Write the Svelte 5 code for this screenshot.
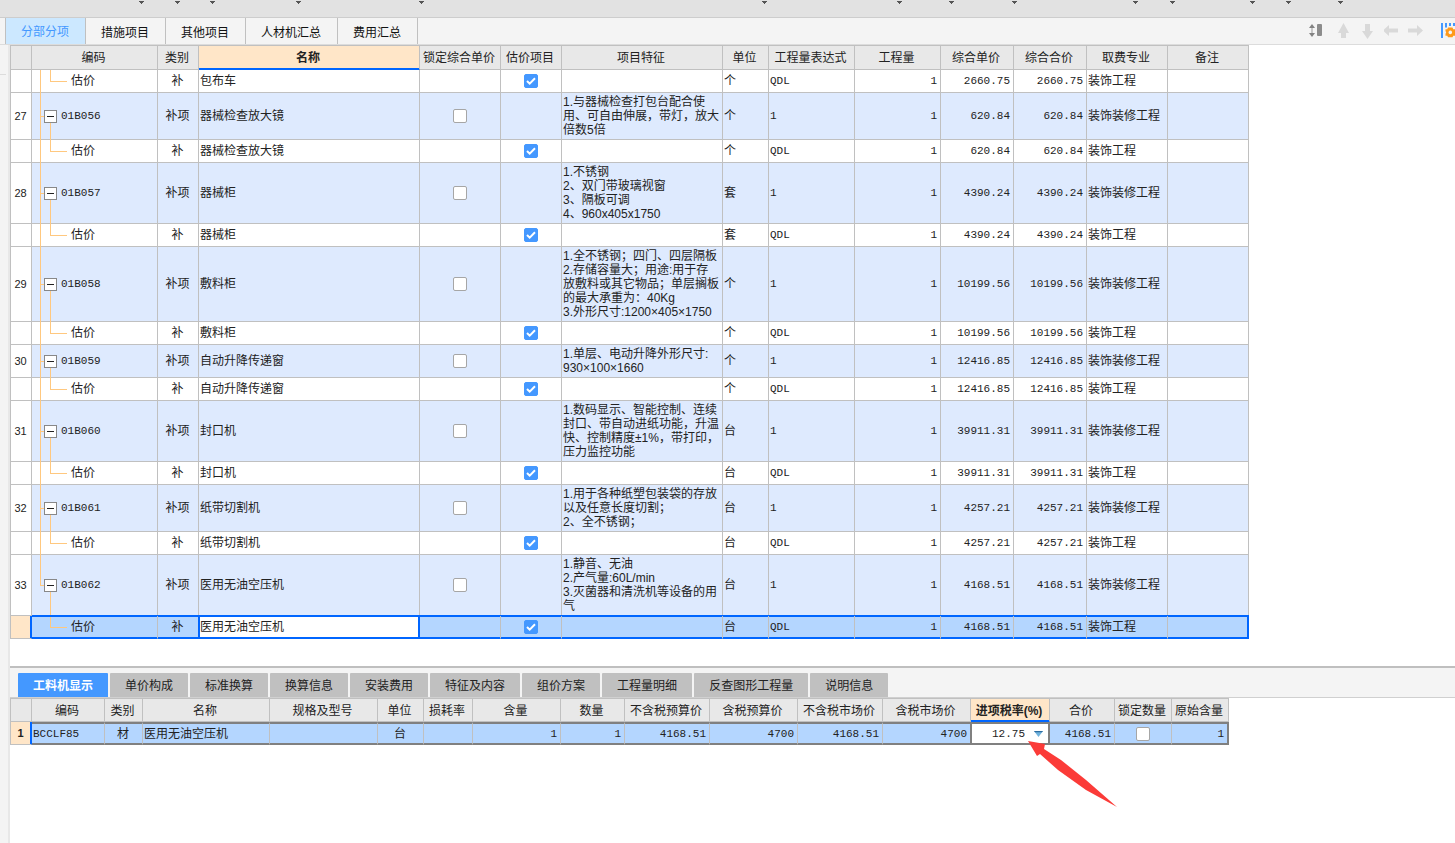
<script>
  // Horizontal distance from one toolbar menu caret to the next.
  const menus = [144, 36, 35, 86, 123, 343, 135, 52, 63, 121, 37, 80, 36, 52];

  const topTabs = ['分部分项', '措施项目', '其他项目', '人材机汇总', '费用汇总'];
  const bottomTabs = ['工料机显示', '单价构成', '标准换算', '换算信息', '安装费用', '特征及内容', '组价方案', '工程量明细', '反查图形工程量', '说明信息'];

  let topActive = $state('分部分项');
  let bottomActive = $state('工料机显示');

  const mainCols = [
    ['', 21], ['编码', 126], ['类别', 41], ['名称', 221], ['锁定综合单价', 81], ['估价项目', 61], ['项目特征', 161],
    ['单位', 46], ['工程量表达式', 86], ['工程量', 86], ['综合单价', 73], ['综合合价', 73], ['取费专业', 81], ['备注', 81]
  ];

  const items = [
    { no: 27, code: '01B056', name: '器械检查放大镜', unit: '个', price: '620.84', spec: ['1.与器械检查打包台配合使', '用、可自由伸展，带灯，放大', '倍数5倍'] },
    { no: 28, code: '01B057', name: '器械柜', unit: '套', price: '4390.24', spec: ['1.不锈钢', '2、双门带玻璃视窗', '3、隔板可调', '4、960x405x1750'] },
    { no: 29, code: '01B058', name: '敷料柜', unit: '个', price: '10199.56', spec: ['1.全不锈钢；四门、四层隔板', '2.存储容量大；用途:用于存', '放敷料或其它物品；单层搁板', '的最大承重为：40Kg', '3.外形尺寸:1200×405×1750'] },
    { no: 30, code: '01B059', name: '自动升降传递窗', unit: '个', price: '12416.85', spec: ['1.单层、电动升降外形尺寸:', '930×100×1660'] },
    { no: 31, code: '01B060', name: '封口机', unit: '台', price: '39911.31', spec: ['1.数码显示、智能控制、连续', '封口、带自动进纸功能，升温', '快、控制精度±1%，带打印，', '压力监控功能'] },
    { no: 32, code: '01B061', name: '纸带切割机', unit: '台', price: '4257.21', spec: ['1.用于各种纸塑包装袋的存放', '以及任意长度切割；', '2、全不锈钢；'] },
    { no: 33, code: '01B062', name: '医用无油空压机', unit: '台', price: '4168.51', spec: ['1.静音、无油', '2.产气量:60L/min', '3.灭菌器和清洗机等设备的用', '气'] }
  ];

  const rows = [
    { child: true, name: '包布车', unit: '个', price: '2660.75' },
    ...items.flatMap((it, i) => {
      const last = i === items.length - 1;
      return [
        { ...it, last },
        { child: true, name: it.name, unit: it.unit, price: it.price, last, selected: last }
      ];
    })
  ];

  const detailCols = [
    ['', 21], ['编码', 73], ['类别', 38], ['名称', 127], ['规格及型号', 108], ['单位', 46], ['损耗率', 49], ['含量', 88], ['数量', 64],
    ['不含税预算价', 85], ['含税预算价', 88], ['不含税市场价', 85], ['含税市场价', 88], ['进项税率(%)', 79], ['合价', 65], ['锁定数量', 57], ['原始含量', 57]
  ];
</script>

<div class="page">
  <header class="toolbar">
    {#each menus as width}
      <button class="menu" style="width: {width}px" aria-label="菜单">
        <svg width="5" height="4" viewBox="0 0 5 4" shape-rendering="crispEdges"><path d="M0 1h5v1H4v1H3v1H2V3H1V2H0z" fill="#555" /></svg>
      </button>
    {/each}
  </header>

  <nav class="tabs">
    {#each topTabs as tab}
      <button class="tab" class:active={tab === topActive} onclick={() => (topActive = tab)}>{tab}</button>
    {/each}
    <div class="tools">
      <button aria-label="行高">
        <svg width="20" height="16" viewBox="0 0 20 16"><path d="M4 4v8" stroke="#c6c6c6" stroke-width="2" /><path d="M1 5 4 1 7 5zM1 10h6L4 14z" fill="#828282" /><rect x="9" y="1" width="5" height="12" rx="1" fill="#8c8c8c" /></svg>
      </button>
      <button aria-label="上移">
        <svg width="16" height="16" viewBox="0 0 16 16"><path d="M7.500 0 13 10h-3V15H5V10H2z" fill="#d9d9d9" /></svg>
      </button>
      <button aria-label="下移">
        <svg width="16" height="16" viewBox="0 0 16 16"><path d="M7.500 16 2 8h3V1h5v7h3z" fill="#d9d9d9" /></svg>
      </button>
      <button aria-label="左移">
        <svg width="16" height="16" viewBox="0 0 16 16"><path d="M-1 7.500 5 2v3.500h9v4H5V13z" fill="#d9d9d9" /></svg>
      </button>
      <button aria-label="右移">
        <svg width="16" height="16" viewBox="0 0 16 16"><path d="M15 7.500 9 2v3.500H0v4h9V13z" fill="#d9d9d9" /></svg>
      </button>
      <button class="settings" aria-label="列设置">
        <svg width="15" height="16" viewBox="0 0 15 16">
          <path d="M1 0h2v15H1zM5 0h2v4.500H5zM9 0h2v3H9zM13 0h2v3h-2z" fill="#4498ff" />
          <path fill-rule="evenodd" fill="#ff9a1a" d="M8 4.500h4.500l.7 1.700H15v6.500h-1.800l-.7 1.500H8l-.7-1.500H5.500v-2L6.200 9.400 5.500 8V6.200h1.800zM10.300 7.600a1.800 1.800 0 1 0 .01 0z" />
        </svg>
      </button>
    </div>
  </nav>

  <div class="body">
    <aside class="rail"></aside>
    <main class="content">
      <section class="pane">
        <table class="grid main">
          <colgroup>{#each mainCols as [, w]}<col style="width: {w}px" />{/each}</colgroup>
          <thead>
            <tr>
              {#each mainCols as [label]}<th class:current={label === '名称'}>{label}</th>{/each}
            </tr>
          </thead>
          <tbody>
            {#each rows as r}
              <tr class:item={!r.child} class:selected={r.selected}>
                <th class="rowhead" scope="row">{r.no ?? ''}</th>
                <td class="tree" class:leaf={r.child} class:end={r.last}>
                  {#if r.child}
                    <span class="leaf-name">估价</span>
                  {:else}
                    <span class="node">
                      <button class="toggle" aria-label="折叠"><svg width="11" height="11" viewBox="0 0 11 11"><path d="M2 5h7v1H2z" fill="#222" /></svg></button>
                      <span class="code">{r.code}</span>
                    </span>
                  {/if}
                </td>
                <td class="center">{r.child ? '补' : '补项'}</td>
                <td class:focus={r.selected}>{r.name}</td>
                <td class="center">{#if !r.child}<input type="checkbox" aria-label="锁定综合单价" />{/if}</td>
                <td class="center">{#if r.child}<input type="checkbox" aria-label="估价项目" checked />{/if}</td>
                <td class="spec">{#each r.spec ?? [] as line}<div>{line}</div>{/each}</td>
                <td>{r.unit}</td>
                <td class="code">{r.child ? 'QDL' : '1'}</td>
                <td class="num">1</td>
                <td class="num">{r.price}</td>
                <td class="num">{r.price}</td>
                <td>{r.child ? '装饰工程' : '装饰装修工程'}</td>
                <td></td>
              </tr>
            {/each}
          </tbody>
        </table>
      </section>

      <section class="detail">
        <nav class="subtabs">
          {#each bottomTabs as tab}
            <button class="subtab" class:active={tab === bottomActive} onclick={() => (bottomActive = tab)}>{tab}</button>
          {/each}
        </nav>
        <table class="grid lower">
          <colgroup>{#each detailCols as [, w]}<col style="width: {w}px" />{/each}</colgroup>
          <thead>
            <tr>
              {#each detailCols as [label]}<th class:current={label === '进项税率(%)'}>{label}</th>{/each}
            </tr>
          </thead>
          <tbody>
            <tr class="selected">
              <th class="rowhead" scope="row">1</th>
              <td class="code">BCCLF85</td>
              <td class="center">材</td>
              <td>医用无油空压机</td>
              <td></td>
              <td class="center">台</td>
              <td></td>
              <td class="num">1</td>
              <td class="num">1</td>
              <td class="num">4168.51</td>
              <td class="num">4700</td>
              <td class="num">4168.51</td>
              <td class="num">4700</td>
              <td class="focus">
                <div class="combo">
                  <input type="text" value="12.75" aria-label="进项税率(%)" />
                  <button aria-label="选择税率">
                    <svg width="9" height="6" viewBox="0 0 9 6"><path d="M0 0h9L4.500 6z" fill="#6fb2dd" /><path d="M0 0h9L8 1.300H1z" fill="#2c6ca0" /></svg>
                  </button>
                </div>
                <svg class="pointer" width="92" height="68" viewBox="0 0 92 68"><path d="M0 0 17 3 16 8 33 19 58 39 89 66 58 49 30 29 12 13 9 15z" fill="#fb3b38" /></svg>
              </td>
              <td class="num">4168.51</td>
              <td class="center"><input type="checkbox" aria-label="锁定数量" /></td>
              <td class="num">1</td>
            </tr>
          </tbody>
        </table>
      </section>
    </main>
  </div>
</div>

<style>
  :global(body) {
    background: #fff;
  }

  .page {
    --line: #c0c0c0;
    --blue: #0066ff;
    --wheat: #ffe6c8;
    --tree: #ffc87f;
    min-height: 100vh;
    display: flex;
    flex-direction: column;
    overflow: hidden;
    font: 12px/14px 'Noto Sans CJK SC', 'Noto Sans', sans-serif;
    color: #222;
  }

  button {
    border: 0;
    padding: 0;
    background: none;
    font: inherit;
    color: inherit;
    flex: none;
  }

  svg {
    display: block;
  }

  .toolbar {
    display: flex;
    height: 17px;
    background: #e2e2e2;
    border-bottom: 1px solid #cdcdcd;
  }

  .menu {
    display: flex;
    justify-content: flex-end;
    align-items: flex-start;
  }

  .tabs {
    display: flex;
    height: 26px;
    padding-left: 5px;
    background: #f4f4f4;
    border-bottom: 1px solid #dcdcdc;
  }

  .tab {
    padding: 2px 16px 0 15px;
    border-right: 1px solid var(--line);
    color: #111;
  }

  .tab.active {
    border-left: 1px solid var(--line);
    padding-top: 0;
    background: #cce8ff;
    color: #4498ff;
  }

  .tools {
    display: flex;
    align-items: center;
    gap: 8px;
    margin-left: auto;
  }

  .settings {
    margin-left: 8px;
  }

  .body {
    display: flex;
    flex: 1;
  }

  .rail {
    flex: none;
    width: 8px;
    background: linear-gradient(#dcdcdc, #dcdcdc) 0 29px / 6px 1px no-repeat #f4f4f4;
    border-right: 2px solid #e8e8e8;
  }

  .content {
    flex: 1;
    min-width: 0;
    display: flex;
    flex-direction: column;
  }

  .pane {
    padding-bottom: 27px;
  }

  .detail {
    flex: 1;
    border-top: 2px solid #bfbfbf;
  }

  .subtabs {
    display: flex;
    gap: 2px;
    padding: 5px 8px 0;
    background: #f4f4f4;
    border-bottom: 1px solid #d0d0d0;
  }

  .subtab {
    height: 24px;
    padding: 0 15px;
    border-radius: 1px 1px 0 0;
    background: #c0c0c0;
  }

  .subtab.active {
    background: #4498ff;
    color: #fff;
    font-weight: bold;
  }

  .grid {
    table-layout: fixed;
    width: 0;
    border-collapse: separate;
    border-spacing: 0;
    border-top: 1px solid var(--line);
    border-left: 1px solid var(--line);
    font-family: 'Liberation Sans', 'Noto Sans CJK SC', sans-serif;
  }

  .grid th,
  .grid td {
    box-sizing: border-box;
    height: 23px;
    padding: 0 2px 0 1px;
    border-right: 1px solid var(--line);
    border-bottom: 1px solid var(--line);
    text-align: left;
    white-space: nowrap;
  }

  .grid thead th {
    padding: 0 2px 0 0;
    background: #e8e8e8;
    font-weight: normal;
    text-align: center;
  }

  .main thead th {
    height: 24px;
  }

  .grid.lower thead th {
    padding-top: 2px;
  }

  .grid thead th.current {
    background: var(--wheat);
    font-weight: bold;
    border-bottom-color: var(--blue);
    box-shadow: inset 0 -1px var(--blue);
  }

  .grid .rowhead {
    padding: 0 1px 0 0;
    text-align: center;
    font: 11px/14px 'Liberation Sans', sans-serif;
  }

  .grid .center {
    text-align: center;
  }

  .grid .num {
    padding-right: 3px;
    text-align: right;
  }

  .code,
  .num {
    font-family: 'Liberation Mono', monospace;
    font-size: 11px;
  }

  .grid .spec {
    padding: 2px 0 2px 1px;
  }

  .item td {
    background-color: #deeafe;
  }

  .grid td.tree {
    --v: linear-gradient(var(--tree), var(--tree));
    --rule: linear-gradient(var(--line), var(--line));
    padding: 0 0 1px;
    border-bottom: 0;
    background-repeat: no-repeat;
    background-image: var(--v), var(--v), var(--v), var(--rule);
    background-position: 8px 0, 8px 50%, 18px 100%, 0 100%;
    background-size: 1px 100%, 4px 1px, 1px 50%, 100% 1px;
  }

  .grid td.tree.leaf {
    background-position: 8px 0, 18px 11px, 18px 0, 0 100%;
    background-size: 1px 100%, 17px 1px, 1px 11px, 100% 1px;
  }

  .grid td.tree.end {
    background-size: 1px 50%, 4px 1px, 1px 50%, 100% 1px;
  }

  .grid td.tree.leaf.end {
    background-image: var(--v), var(--v);
    background-position: 18px 11px, 18px 0;
    background-size: 17px 1px, 1px 11px;
    border-bottom: 1px solid var(--blue);
    padding-bottom: 0;
  }

  .leaf-name {
    padding-left: 39px;
  }

  .node {
    display: flex;
    align-items: center;
    gap: 4px;
    padding-left: 12px;
  }

  .toggle {
    border: 1px solid #888;
    background: #fff;
  }

  input[type='checkbox'] {
    appearance: none;
    display: block;
    width: 14px;
    height: 14px;
    margin: 0 auto;
    border: 1px solid #a6a6a6;
    border-radius: 2px;
    background: #fff;
  }

  input[type='checkbox']:checked {
    border-color: #4498ff;
    background: #4498ff url("data:image/svg+xml,%3Csvg xmlns='http://www.w3.org/2000/svg' viewBox='0 0 12 12'%3E%3Cpath d='M2 6l2.700 2.700L10 3.300' fill='none' stroke='white' stroke-width='2'/%3E%3C/svg%3E");
  }

  .selected td {
    background-color: #b4d6ff;
  }

  .selected .rowhead {
    background: var(--wheat);
    border-right-color: var(--blue);
    box-shadow: inset -1px 0 var(--blue);
  }

  .main .selected td {
    border-bottom-color: var(--blue);
    box-shadow: 0 -1px var(--blue), inset 0 1px var(--blue), inset 0 -1px var(--blue);
  }

  .main .selected td:nth-child(3) {
    border-right-color: var(--blue);
  }

  .main .selected td.focus {
    background: #fff;
    border-right-color: var(--blue);
    box-shadow: 0 -1px var(--blue), inset 0 0 0 1px var(--blue);
  }

  .main .selected td:last-child {
    border-right-color: var(--blue);
    box-shadow: 0 -1px var(--blue), inset 0 1px var(--blue), inset 0 -1px var(--blue), inset -1px 0 var(--blue);
  }

  .lower .rowhead {
    font-weight: bold;
  }

  .lower .selected td {
    border-top: 2px solid #808080;
    border-bottom: 2px solid #808080;
  }

  .lower .selected td:nth-child(13) {
    border-right-color: #808080;
  }

  .lower .selected td:last-child {
    border-right: 2px solid #808080;
  }

  .lower .selected td.focus {
    position: relative;
    padding: 0;
    background: #fff;
    border-right: 2px solid #808080;
    border-left: 1px solid #808080;
  }

  .combo {
    display: flex;
    align-items: center;
    padding-right: 5px;
  }

  .combo input {
    flex: 1;
    min-width: 0;
    height: 18px;
    padding: 0 9px 0 0;
    border: 0;
    outline: 0;
    background: none;
    color: inherit;
    font: 11px/14px 'Liberation Mono', monospace;
    text-align: right;
  }

  .pointer {
    position: absolute;
    left: 56px;
    top: 17px;
    pointer-events: none;
  }
</style>
